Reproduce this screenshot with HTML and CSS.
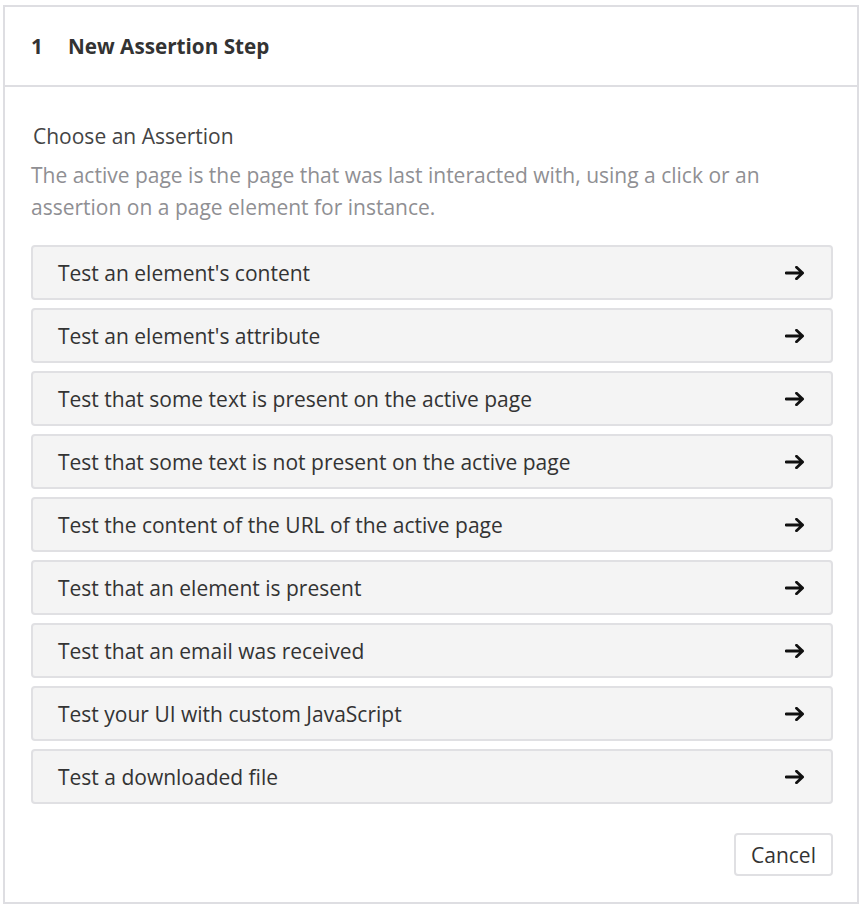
FILE: index.html
```html
<!DOCTYPE html>
<html lang="en">
<head>
<meta charset="utf-8">
<title>New Assertion Step</title>
<link rel="stylesheet" href="styles.css">
</head>
<body>
<div class="dialog">
  <div class="header">
    <span class="num">1</span>
    <span class="title">New Assertion Step</span>
  </div>
  <div class="body">
    <div class="label">Choose an Assertion</div>
    <div class="desc">The active page is the page that was last interacted with, using a click or an assertion on a page element for instance.</div>
    <div class="list">
      <div class="item"><span>Test an element's content</span><svg class="arrow" viewBox="0 0 20 14" width="20" height="14"><path d="M1 7H17.5M11.5 1.2L17.6 7L11.5 12.8"/></svg></div>
      <div class="item"><span>Test an element's attribute</span><svg class="arrow" viewBox="0 0 20 14" width="20" height="14"><path d="M1 7H17.5M11.5 1.2L17.6 7L11.5 12.8"/></svg></div>
      <div class="item"><span>Test that some text is present on the active page</span><svg class="arrow" viewBox="0 0 20 14" width="20" height="14"><path d="M1 7H17.5M11.5 1.2L17.6 7L11.5 12.8"/></svg></div>
      <div class="item"><span>Test that some text is not present on the active page</span><svg class="arrow" viewBox="0 0 20 14" width="20" height="14"><path d="M1 7H17.5M11.5 1.2L17.6 7L11.5 12.8"/></svg></div>
      <div class="item"><span>Test the content of the URL of the active page</span><svg class="arrow" viewBox="0 0 20 14" width="20" height="14"><path d="M1 7H17.5M11.5 1.2L17.6 7L11.5 12.8"/></svg></div>
      <div class="item"><span>Test that an element is present</span><svg class="arrow" viewBox="0 0 20 14" width="20" height="14"><path d="M1 7H17.5M11.5 1.2L17.6 7L11.5 12.8"/></svg></div>
      <div class="item"><span>Test that an email was received</span><svg class="arrow" viewBox="0 0 20 14" width="20" height="14"><path d="M1 7H17.5M11.5 1.2L17.6 7L11.5 12.8"/></svg></div>
      <div class="item"><span>Test your UI with custom JavaScript</span><svg class="arrow" viewBox="0 0 20 14" width="20" height="14"><path d="M1 7H17.5M11.5 1.2L17.6 7L11.5 12.8"/></svg></div>
      <div class="item"><span>Test a downloaded file</span><svg class="arrow" viewBox="0 0 20 14" width="20" height="14"><path d="M1 7H17.5M11.5 1.2L17.6 7L11.5 12.8"/></svg></div>
    </div>
    <div class="footer">
      <button class="cancel">Cancel</button>
    </div>
  </div>
</div>
</body>
</html>
```
FILE: styles.css
```css
html, body {
  margin: 0;
  padding: 0;
  background: #ffffff;
}
body {
  font-family: "Open Sans", "Noto Sans", sans-serif;
  color: #333333;
  padding: 5px 1px 2px 3px;
}
.dialog {
  width: 852px;
  height: 895px;
  border: 2px solid #dedee2;
  box-sizing: content-box;
  background: #fff;
  display: flex;
  flex-direction: column;
}
.header {
  height: 78px;
  border-bottom: 2px solid #dedee2;
  display: flex;
  align-items: center;
  padding-left: 26px;
  font-size: 20.7px;
  font-weight: 700;
  color: #333;
}
.num {
  width: 37px;
}
.body {
  padding: 34px 24px 0 26px;
  display: flex;
  flex-direction: column;
}
.label {
  font-size: 21px;
  color: #444;
  line-height: 30px;
  padding-left: 2px;
}
.desc {
  font-size: 21px;
  color: #8f8f93;
  line-height: 32px;
  margin-top: 8px;
}
.list {
  display: flex;
  flex-direction: column;
  gap: 8px;
  margin-top: 22px;
}
.item {
  height: 55px;
  box-sizing: border-box;
  border: 2px solid #e0e0e3;
  border-radius: 4px;
  background: #f4f4f4;
  display: flex;
  align-items: center;
  justify-content: space-between;
  padding: 0 26px 0 25px;
  font-size: 21px;
  color: #333;
}
.arrow {
  fill: none;
  stroke: #111;
  stroke-width: 2.8;
  stroke-linecap: round;
  stroke-linejoin: round;
}
.footer {
  display: flex;
  justify-content: flex-end;
  margin-top: 29px;
}
.cancel {
  font-family: "Open Sans", "Noto Sans", sans-serif;
  font-size: 21px;
  color: #333;
  background: #fff;
  border: 2px solid #e0e0e3;
  border-radius: 4px;
  width: 99px;
  height: 43px;
  padding: 0;
}
```
